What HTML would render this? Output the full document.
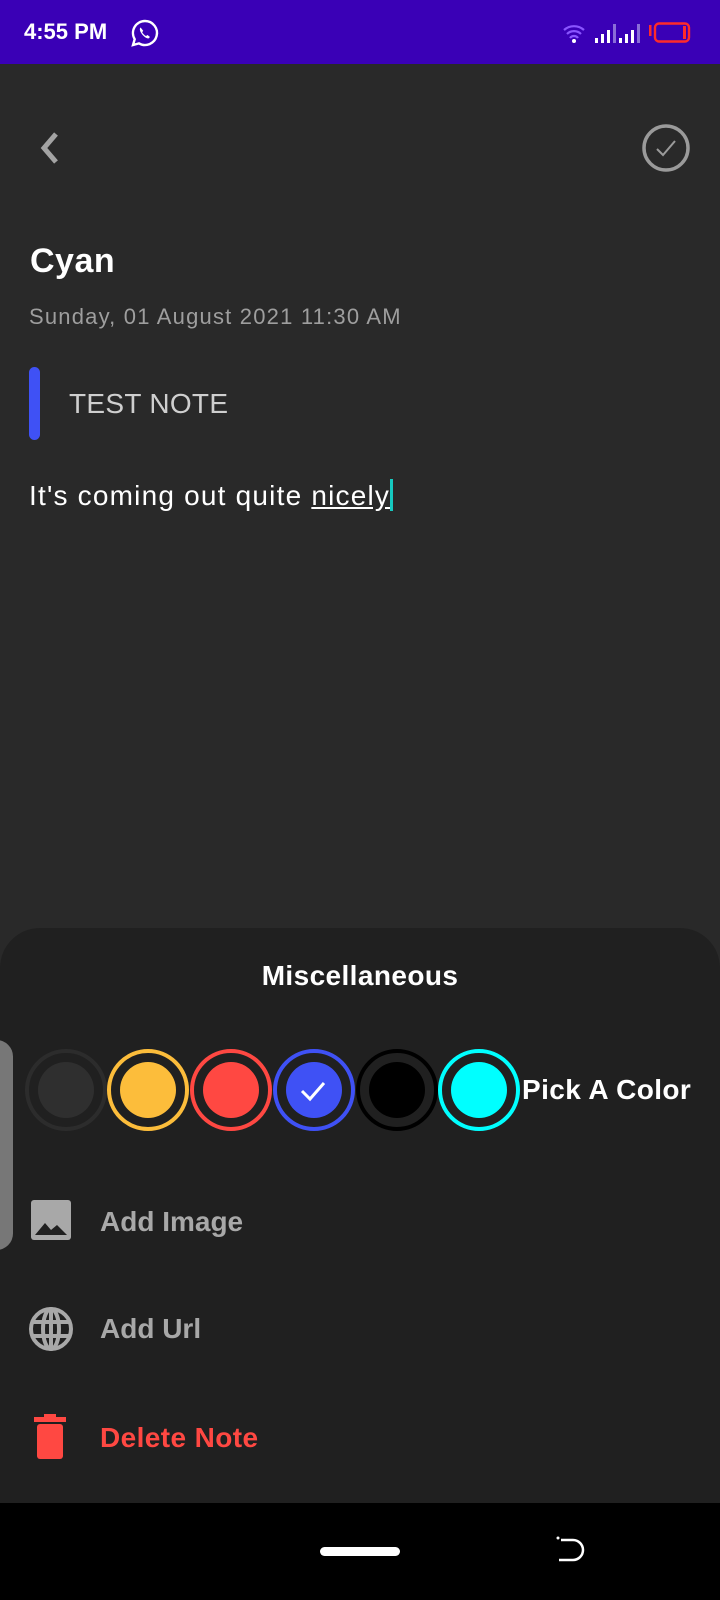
<!DOCTYPE html>
<html><head><meta charset="utf-8"><style>
*{margin:0;padding:0;box-sizing:border-box}
body{width:720px;height:1600px;background:#292929;position:relative;overflow:hidden;font-family:"Liberation Sans",sans-serif}
.a{position:absolute}
.t{position:absolute;white-space:nowrap;line-height:1}
</style></head><body>
<div class="a" style="left:0;top:0;width:720px;height:64px;background:#3a00b6"></div>
<div class="t" style="left:24px;top:21px;font-size:22px;font-weight:bold;color:#fff">4:55 PM</div>
<svg class="a" style="left:130px;top:18px" width="30" height="30" viewBox="0 0 30 30"><path d="M15 3a12 12 0 0 0-10.3 18.2L3 27l6-1.6A12 12 0 1 0 15 3z" fill="none" stroke="#fff" stroke-width="2.4"/><path d="M10.5 9.5c-1 1-1 3 1 6s5 5 7 5l1.5-1.5-2.5-2-1.5 1c-1.5-.8-3-2.3-3.8-3.8l1-1.5-2-2.5z" fill="#fff"/></svg>
<svg class="a" style="left:562px;top:22px" width="136" height="22" viewBox="0 0 136 22"><path d="M2 8a15 15 0 0 1 20 0M5 12a10 10 0 0 1 14 0M8 16a5 5 0 0 1 8 0" stroke="#8a55ff" stroke-width="2.2" fill="none"/><circle cx="12" cy="19" r="2" fill="#fff"/><g fill="#fff"><rect x="33" y="16" width="3" height="5"/><rect x="39" y="12" width="3" height="9"/><rect x="45" y="8" width="3" height="13"/></g><rect x="51" y="2" width="3" height="19" fill="#8a6dd8"/><g fill="#fff"><rect x="57" y="16" width="3" height="5"/><rect x="63" y="12" width="3" height="9"/><rect x="69" y="8" width="3" height="13"/></g><rect x="75" y="2" width="3" height="19" fill="#8a6dd8"/><rect x="87" y="3" width="2.5" height="11" fill="#ff2a2a"/><rect x="93" y="1.5" width="34" height="18" rx="4" fill="none" stroke="#ff2a2a" stroke-width="2.4"/><rect x="121" y="4" width="3" height="13" fill="#ff2a2a"/></svg>
<svg class="a" style="left:36px;top:130px" width="28" height="36" viewBox="0 0 28 36"><path d="M20 4L8 18l12 14" stroke="#a3a3a3" stroke-width="5" fill="none"/></svg>
<svg class="a" style="left:641px;top:123px" width="50" height="50" viewBox="0 0 50 50"><circle cx="25" cy="25" r="22" fill="none" stroke="#9a9a9a" stroke-width="3.5"/><path d="M16 26l6 6 12-14" stroke="#9a9a9a" stroke-width="2" fill="none"/></svg>
<div class="t" style="left:30px;top:244px;font-size:34px;font-weight:bold;color:#fff;letter-spacing:0.5px">Cyan</div>
<div class="t" style="left:29px;top:306px;font-size:22px;color:#9e9e9e;letter-spacing:1.2px">Sunday, 01 August 2021 11:30 AM</div>
<div class="a" style="left:29px;top:367px;width:11px;height:73px;border-radius:6px;background:#3f51f5"></div>
<div class="t" style="left:69px;top:390px;font-size:28px;color:#cfcfcf;letter-spacing:0.3px">TEST NOTE</div>
<div class="t" style="left:29px;top:479px;font-size:28px;color:#fff;letter-spacing:1.2px">It's coming out quite <span style="text-decoration:underline">nicely</span><span style="display:inline-block;width:3px;height:32px;background:#16c9c0;vertical-align:-6px"></span></div>
<div class="a" style="left:0;top:928px;width:720px;height:600px;background:#202020;border-radius:40px 40px 0 0"></div>
<div class="t" style="left:0;width:720px;text-align:center;top:962px;font-size:28px;font-weight:bold;color:#fff;letter-spacing:0.4px">Miscellaneous</div>
<div class="a" style="left:-20px;top:1040px;width:33px;height:210px;border-radius:18px;background:#777"></div>
<svg class="a" style="left:0;top:1040px" width="530" height="100" viewBox="0 1040 530 100">
<g stroke-width="4" fill="none"><circle cx="66" cy="1090" r="39" stroke="#2c2c2c"/><circle cx="148" cy="1090" r="39" stroke="#fcbd3b"/><circle cx="231" cy="1090" r="39" stroke="#ff4842"/><circle cx="314" cy="1090" r="39" stroke="#3f51f5"/><circle cx="397" cy="1090" r="39" stroke="#000"/><circle cx="479" cy="1090" r="39" stroke="#00ffff"/></g>
<circle cx="66" cy="1090" r="28" fill="#2f2f2f"/><circle cx="148" cy="1090" r="28" fill="#fcbd3b"/><circle cx="231" cy="1090" r="28" fill="#ff4842"/><circle cx="314" cy="1090" r="28" fill="#3f51f5"/><circle cx="397" cy="1090" r="28" fill="#000"/><circle cx="479" cy="1090" r="28" fill="#00ffff"/>
<path d="M302 1091l8 8 14-16" stroke="#fff" stroke-width="3" fill="none"/></svg>
<div class="t" style="left:522px;top:1076px;font-size:28px;font-weight:bold;color:#fff;letter-spacing:0.4px">Pick A Color</div>
<svg class="a" style="left:30px;top:1199px" width="42" height="42" viewBox="0 0 42 42"><rect x="1" y="1" width="40" height="40" rx="3" fill="#a8a8a8"/><path d="M5 36l10-12 6 7 6-5 10 10z" fill="#202020"/></svg>
<div class="t" style="left:100px;top:1208px;font-size:28px;font-weight:bold;color:#a8a8a8">Add Image</div>
<svg class="a" style="left:28px;top:1306px" width="46" height="46" viewBox="0 0 46 46"><g fill="none" stroke="#a8a8a8" stroke-width="4"><circle cx="23" cy="23" r="20"/><ellipse cx="23" cy="23" rx="8" ry="20"/><path d="M4 16h38M4 30h38M23 3v40"/></g></svg>
<div class="t" style="left:100px;top:1315px;font-size:28px;font-weight:bold;color:#a8a8a8">Add Url</div>
<svg class="a" style="left:34px;top:1414px" width="34" height="46" viewBox="0 0 34 46"><rect x="0" y="3" width="32" height="5" fill="#ff4842"/><rect x="10" y="0" width="12" height="5" fill="#ff4842"/><rect x="3" y="10" width="26" height="35" rx="3" fill="#ff4842"/></svg>
<div class="t" style="left:100px;top:1424px;font-size:28px;font-weight:bold;color:#ff4842;letter-spacing:0.4px">Delete Note</div>
<div class="a" style="left:0;top:1503px;width:720px;height:97px;background:#000"></div>
<div class="a" style="left:320px;top:1547px;width:80px;height:9px;border-radius:5px;background:#fff"></div>
<svg class="a" style="left:555px;top:1535px" width="32" height="32" viewBox="0 0 32 32"><path d="M6 5h12a10 10 0 0 1 0 20H4" fill="none" stroke="#fff" stroke-width="2.5"/><circle cx="3" cy="3" r="1.5" fill="#fff"/></svg>
</body></html>
